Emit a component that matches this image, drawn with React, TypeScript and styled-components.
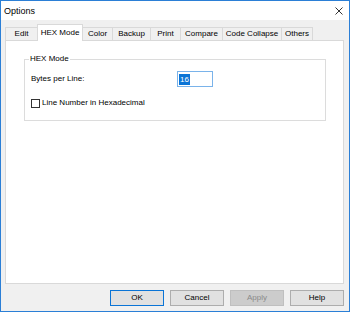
import React from "react";
import styled, { createGlobalStyle } from "styled-components";

const GlobalStyle = createGlobalStyle`
  html, body {
    margin: 0;
    padding: 0;
    background: #ffffff;
  }
  body {
    font-family: "Liberation Sans", Arial, sans-serif;
    font-size: 8px;
    color: #000;
  }
`;

const Window = styled.div`
  width: 350px;
  height: 312px;
  box-sizing: border-box;
  border: 1px solid #2b7fd6;
  background: #f0f0f0;
  display: flex;
  flex-direction: column;
`;

const TitleBar = styled.div`
  height: 19px;
  background: #ffffff;
  display: flex;
  align-items: center;
  justify-content: space-between;
  padding: 0 6px 0 3px;
  font-size: 9px;
  flex-shrink: 0;
`;

const CloseButton = styled.div`
  width: 8px;
  height: 8px;
  display: flex;
  & svg {
    display: block;
  }
`;

const Body = styled.div`
  flex: 1;
  display: flex;
  flex-direction: column;
  padding: 4px 5px 5px 4px;
  min-height: 0;
`;

const TabStrip = styled.div`
  display: flex;
  align-items: flex-end;
  height: 17px;
  margin-bottom: -1px;
  position: relative;
  z-index: 1;
  flex-shrink: 0;
`;

const Tab = styled.div<{ $active?: boolean; $w: number }>`
  width: ${(p) => p.$w}px;
  box-sizing: border-box;
  height: ${(p) => (p.$active ? 17 : 13)}px;
  margin-bottom: ${(p) => (p.$active ? 0 : 1)}px;
  margin-left: -1px;
  border: 1px solid #d9d9d9;
  border-bottom: none;
  background: ${(p) => (p.$active ? "#ffffff" : "#f0f0f0")};
  position: relative;
  z-index: ${(p) => (p.$active ? 2 : 1)};
  display: flex;
  align-items: center;
  justify-content: center;
  white-space: nowrap;
  line-height: 10px;
  padding-bottom: ${(p) => (p.$active ? 1 : 0)}px;

  &:first-child {
    margin-left: 0;
  }
`;

const Panel = styled.div`
  flex: 1;
  background: #ffffff;
  border: 1px solid #d9d9d9;
  padding: 13px 17px 0 18px;
`;

const GroupBox = styled.fieldset`
  margin: 0;
  border: 1px solid #dcdcdc;
  padding: 0 4px 12px 4px;
`;

const Legend = styled.legend`
  padding: 0 1px;
  line-height: 10px;
  font-size: 8px;
`;

const FieldRow = styled.div<{ $top: number }>`
  display: flex;
  align-items: center;
  margin-top: ${(p) => p.$top}px;
  padding-left: 2px;
  line-height: 10px;
`;

const FieldLabel = styled.span`
  width: 146px;
`;

const TextBox = styled.div`
  width: 36px;
  height: 16px;
  box-sizing: border-box;
  border: 1px solid #7ab3ea;
  background: #fff;
  display: flex;
  align-items: center;
  padding-left: 1px;
`;

const Selection = styled.span`
  background: #0a74d6;
  color: #ffffff;
  line-height: 11px;
  padding: 0 1px;
`;

const CheckBox = styled.span`
  width: 9px;
  height: 9px;
  box-sizing: border-box;
  border: 1px solid #333333;
  background: #fff;
  margin-right: 2px;
  flex-shrink: 0;
`;

const ButtonBar = styled.div`
  display: flex;
  justify-content: flex-end;
  gap: 6px;
  margin-top: 6px;
  flex-shrink: 0;
`;

const Button = styled.div<{ $default?: boolean; $disabled?: boolean }>`
  width: 54px;
  height: 16px;
  box-sizing: border-box;
  border: 1px solid
    ${(p) => (p.$default ? "#0a74d6" : p.$disabled ? "#bfbfbf" : "#adadad")};
  background: ${(p) => (p.$disabled ? "#cccccc" : "#e1e1e1")};
  color: ${(p) => (p.$disabled ? "#8a8a8a" : "#000")};
  display: flex;
  align-items: center;
  justify-content: center;
  line-height: 10px;
`;

const tabs = [
  { label: "Edit", width: 33 },
  { label: "HEX Mode", width: 46, active: true },
  { label: "Color", width: 31 },
  { label: "Backup", width: 39 },
  { label: "Print", width: 31 },
  { label: "Compare", width: 43 },
  { label: "Code Collapse", width: 60 },
  { label: "Others", width: 32 },
];

const buttons = [
  { label: "OK", isDefault: true },
  { label: "Cancel" },
  { label: "Apply", disabled: true },
  { label: "Help" },
];

const App = () => {
  return (
    <>
      <GlobalStyle />
      <Window>
        <TitleBar>
          <span>Options</span>
          <CloseButton>
            <svg width="8" height="8" viewBox="0 0 8 8">
              <path d="M0.5 0.5 L7.5 7.5 M7.5 0.5 L0.5 7.5" stroke="#333" strokeWidth="1" fill="none" />
            </svg>
          </CloseButton>
        </TitleBar>
        <Body>
          <TabStrip>
            {tabs.map((t) => (
              <Tab key={t.label} $w={t.width} $active={t.active}>
                {t.label}
              </Tab>
            ))}
          </TabStrip>
          <Panel>
            <GroupBox>
              <Legend>HEX Mode</Legend>
              <FieldRow $top={7}>
                <FieldLabel>Bytes per Line:</FieldLabel>
                <TextBox>
                  <Selection>16</Selection>
                </TextBox>
              </FieldRow>
              <FieldRow $top={11}>
                <CheckBox />
                <span>Line Number in Hexadecimal</span>
              </FieldRow>
            </GroupBox>
          </Panel>
          <ButtonBar>
            {buttons.map((b) => (
              <Button key={b.label} $default={b.isDefault} $disabled={b.disabled}>
                {b.label}
              </Button>
            ))}
          </ButtonBar>
        </Body>
      </Window>
    </>
  );
};

export default App;
